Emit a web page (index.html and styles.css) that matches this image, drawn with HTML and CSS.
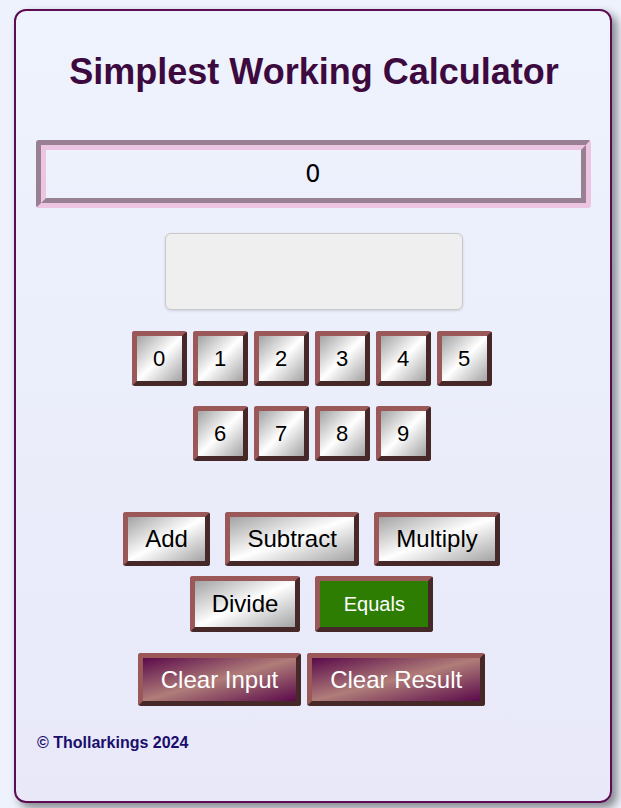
FILE: index.html
```html
<!DOCTYPE html>
<html lang="en">
<head>
<meta charset="utf-8">
<title>Simplest Working Calculator</title>
<link rel="stylesheet" href="styles.css">
</head>
<body>
<main class="calc">
  <h1 class="title">Simplest Working Calculator</h1>
  <input class="entry" type="text" value="0">
  <div class="result"></div>
  <div class="row row-digits1">
    <button class="btn digit">0</button>
    <button class="btn digit">1</button>
    <button class="btn digit">2</button>
    <button class="btn digit">3</button>
    <button class="btn digit">4</button>
    <button class="btn digit">5</button>
  </div>
  <div class="row row-digits2">
    <button class="btn digit">6</button>
    <button class="btn digit">7</button>
    <button class="btn digit">8</button>
    <button class="btn digit">9</button>
  </div>
  <div class="row row-ops1">
    <button class="btn op">Add</button>
    <button class="btn op">Subtract</button>
    <button class="btn op">Multiply</button>
  </div>
  <div class="row row-ops2">
    <button class="btn op">Divide</button>
    <button class="btn equals">Equals</button>
  </div>
  <div class="row row-clear">
    <button class="btn clear">Clear Input</button>
    <button class="btn clear">Clear Result</button>
  </div>
  <footer class="footer">© Thollarkings 2024</footer>
</main>
</body>
</html>
```

FILE: styles.css
```css
* { box-sizing: border-box; }

html, body {
  margin: 0;
  background: #eef2fc;
}

body {
  padding: 9px 9px 5px 14px;
  font-family: "Liberation Sans", Arial, sans-serif;
}

.calc {
  width: 598px;
  height: 794px;
  border: 2px solid #5c0c50;
  border-radius: 12px;
  background: linear-gradient(to bottom, #eef3fd, #e8e8f9);
  box-shadow: 5px 5px 10px rgba(0, 0, 0, 0.45);
  padding: 40px 20px 0 20px;
  display: flex;
  flex-direction: column;
  align-items: center;
}

.title {
  margin: 0;
  font-size: 36px;
  line-height: 42px;
  font-weight: bold;
  color: #3d0a40;
  text-align: center;
  padding-left: 2px;
}

.entry {
  margin-top: 47px;
  width: 555px;
  height: 68px;
  border: 10px groove #ecc5e3;
  border-radius: 3px;
  background: transparent;
  font-family: "DejaVu Sans", sans-serif;
  font-size: 24px;
  color: #000;
  text-align: center;
  padding: 0;
  outline: none;
}

.result {
  margin-top: 25px;
  width: 298px;
  height: 77px;
  background: #efefef;
  border: 1px solid #c9c9c9;
  border-radius: 6px;
  box-shadow: 0 1px 3px rgba(0, 0, 0, 0.12);
  margin-left: 2px;
}

.row {
  display: flex;
  justify-content: center;
  padding-right: 3px;
}

.row-digits1 { margin-top: 21px; gap: 6px; }
.row-digits2 { margin-top: 20px; gap: 6px; }
.row-ops1 { margin-top: 51px; gap: 15.5px; }
.row-ops2 { margin-top: 10px; gap: 15px; }
.row-clear { margin-top: 21px; gap: 6px; }

.btn {
  font-family: "Liberation Sans", Arial, sans-serif;
  border: 5px outset #9a5858;
  border-radius: 3px;
  background: linear-gradient(to bottom right, #a3a3a3 0%, #ffffff 50%, #a3a3a3 100%);
  color: #000;
  padding: 0;
  margin: 0;
  cursor: pointer;
}

.digit {
  width: 55px;
  height: 55px;
  font-size: 22px;
}

.op {
  height: 54px;
  font-size: 24px;
  padding: 0 17px;
}

.row-ops2 .btn { height: 56px; }

.equals {
  width: 118px;
  font-size: 20px;
  color: #fff;
  background: #2c7d02;
}

.clear {
  height: 53px;
  font-size: 24px;
  padding: 0 18px;
  color: #fff;
  background: linear-gradient(to bottom right, #5a0a4a 0%, #b07d79 50%, #5a0a4a 100%);
}

.footer {
  align-self: stretch;
  margin-top: 28px;
  padding-left: 1px;
  font-size: 16px;
  line-height: 18px;
  font-weight: bold;
  color: #1a0d6b;
}
```
